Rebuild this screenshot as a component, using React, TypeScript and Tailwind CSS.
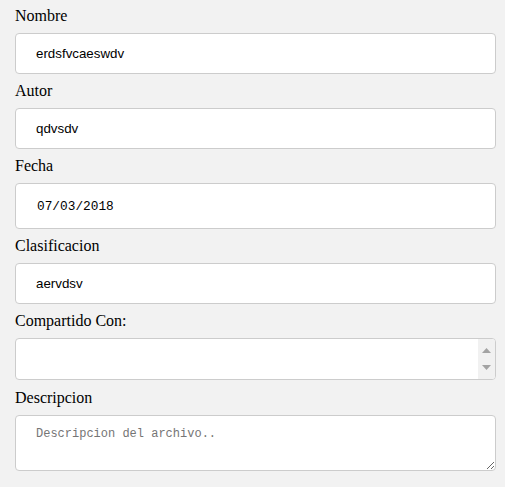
export default function App() {
  const label = "block text-[16px] leading-[18px] text-black [font-family:'Liberation_Serif',serif]";
  const field =
    "block w-full h-[41px] my-[8px] px-[20px] bg-white border border-[#cccccc] rounded-[4px] text-[13.33px] text-black outline-none [font-family:'Liberation_Sans',Arial,sans-serif]";

  return (
    <main className="min-h-[487px] w-[505px] bg-[#f2f2f2] pt-[7px] pl-[15px] pr-[9px]">
      <form>
        <label className={label}>Nombre</label>
        <input className={field} type="text" defaultValue="erdsfvcaeswdv" readOnly />

        <label className={label}>Autor</label>
        <input className={field} type="text" defaultValue="qdvsdv" readOnly />

        <label className={label}>Fecha</label>
        <input
          className="block w-full h-[46px] my-[8px] px-[21px] bg-white border border-[#cccccc] rounded-[4px] text-[12.8px] text-black outline-none [font-family:'Liberation_Mono',monospace]"
          type="text"
          defaultValue="07/03/2018"
          readOnly
        />

        <label className={label}>Clasificacion</label>
        <input className={field} type="text" defaultValue="aervdsv" readOnly />

        <label className={label}>Compartido Con:</label>
        {/* multiple select with an empty list: only the scrollbar shows */}
        <div className="flex h-[42px] mt-[8px] mb-[9px] bg-white border border-[#cccccc] rounded-[4px] overflow-hidden">
          <div className="flex-1" />
          <div className="flex w-[17px] flex-col items-center justify-between bg-[#f1f1f1] py-[9px]">
            <svg width="9" height="5" viewBox="0 0 9 5">
              <path d="M4.5 0L9 5H0z" fill="#a3a3a3" />
            </svg>
            <svg width="9" height="5" viewBox="0 0 9 5">
              <path d="M0 0h9L4.5 5z" fill="#a3a3a3" />
            </svg>
          </div>
        </div>

        <label className={label}>Descripcion</label>
        <textarea
          className="block w-full h-[56px] my-[8px] px-[20px] py-[11px] bg-white border border-[#cccccc] rounded-[4px] text-[12px] leading-[14px] text-black placeholder:text-[#757575] outline-none [font-family:'Liberation_Mono',monospace]"
          placeholder="Descripcion del archivo.."
        />
      </form>
    </main>
  );
}
